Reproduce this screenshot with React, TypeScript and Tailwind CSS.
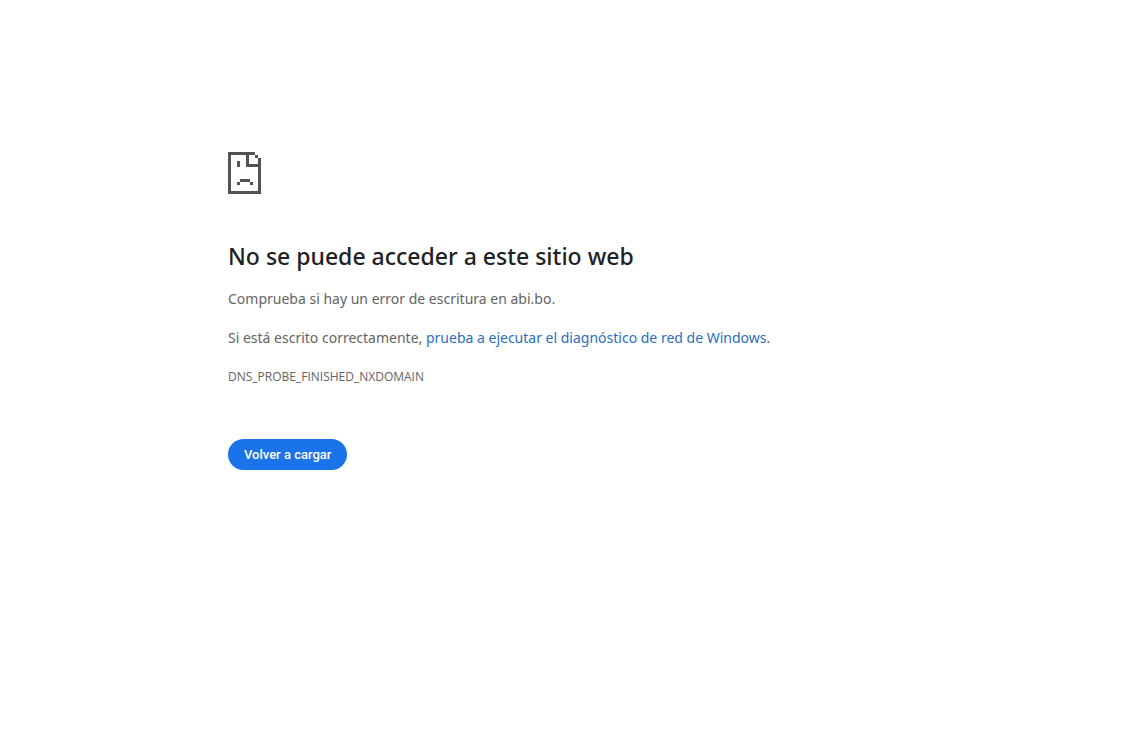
const ERROR_CODE = 'DNS_PROBE_FINISHED_NXDOMAIN'
const HOST = 'abi.bo'

function SadPageIcon() {
  return (
    <svg
      width="33"
      height="42"
      viewBox="0 0 33 42"
      fill="#535353"
      shapeRendering="crispEdges"
      aria-hidden="true"
    >
      {/* sheet with the folded corner */}
      <path d="M0 0H27V3H21V12H30V6H33V42H0ZM3 3V39H30V15H18V3Z" fillRule="evenodd" />
      <path d="M27 3H30V6H27Z" />
      {/* face */}
      <path d="M9 9H12V15H9ZM12 27H22V30H12ZM9 30H12V33H9ZM22 30H25V33H22Z" />
    </svg>
  )
}

export default function App() {
  return (
    <main className="min-h-screen bg-white px-6 pt-[152px] font-['Noto_Sans','Open_Sans',sans-serif] text-[#646464]">
      <div className="mx-auto max-w-[691px]">
        <SadPageIcon />

        <h1 className="mt-12 text-[23px] leading-7 font-medium text-[#202124]">
          No se puede acceder a este sitio web
        </h1>

        <div className="mt-[17px] flex flex-col gap-[15px] text-sm leading-6">
          <p>Comprueba si hay un error de escritura en {HOST}.</p>
          <p>
            Si está escrito correctamente,{' '}
            <a href="#" className="text-[#2b6fc0]">
              prueba a ejecutar el diagnóstico de red de Windows
            </a>
            .
          </p>
          <p className="font-['Open_Sans',sans-serif] text-xs leading-6">{ERROR_CODE}</p>
        </div>

        <button
          type="button"
          className="mt-[50px] h-[31px] rounded-full bg-[#1a73e8] px-4 font-['Roboto',sans-serif] text-[13px] font-medium text-white"
        >
          Volver a cargar
        </button>
      </div>
    </main>
  )
}
